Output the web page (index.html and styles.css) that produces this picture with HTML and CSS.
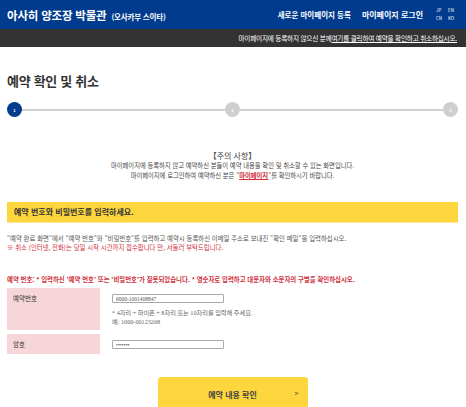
FILE: index.html
```html
<!DOCTYPE html>
<html lang="ko">
<head>
  <meta charset="UTF-8" />
  <meta name="viewport" content="width=device-width, initial-scale=1.0"/>
  <title>예약 확인 및 취소</title>
  <link rel="stylesheet" href="styles.css">
</head>
<body>
  <!-- Header -->
  <div class="header">
    <div class="brand">아사히 양조장 박물관 <span class="brand-sub">(오사카부 스이타)</span></div>
    <div class="header-links">
      <a href="#">새로운 마이페이지 등록</a>
      <a href="#">마이페이지 로그인</a>
      <div class="langs">
        <a href="#">JP</a><a href="#">EN</a>
        <a href="#">CN</a><a href="#">KO</a>
      </div>
    </div>
  </div>
  <div class="subbar">
    마이페이지에 등록하지 않으신 분께<a href="#">여기를 클릭하여 예약을 확인하고 취소하십시오.</a>
  </div>

  <div class="content">
    <h2>예약 확인 및 취소</h2>

    <!-- Steps -->
    <div class="steps">
      <span class="step active">1</span>
      <span class="step-line"></span>
      <span class="step">2</span>
      <span class="step-line"></span>
      <span class="step">3</span>
    </div>

    <div class="notice">
      <p class="notice-title">【주의 사항】</p>
      <p>마이페이지에 등록하지 않고 예약하신 분들이 예약 내용을 확인 및 취소할 수 있는 화면입니다.</p>
      <p>마이페이지에 로그인하여 예약하신 분은 "<a href="#">마이페이지</a>"를 확인하시기 바랍니다.</p>
    </div>

    <div class="section-head">예약 번호와 비밀번호를 입력하세요.</div>

    <p class="desc">"예약 완료 화면"에서 "예약 번호"와 "비밀번호"를 입력하고 예약시 등록하신 이메일 주소로 보내진 "확인 메일"을 입력하십시오.</p>
    <p class="desc warn">※ 취소 (인터넷, 전화)는 당일 시작 시간까지 접수합니다 만, 서둘러 부탁드립니다.</p>

    <p class="error">예약 번호: * 입력하신 '예약 번호' 또는 '비밀번호'가 잘못되었습니다. * 영숫자로 입력하고 대문자와 소문자의 구별을 확인하십시오.</p>

    <div class="form-row">
      <div class="form-label tall">예약번호</div>
      <div class="form-field">
        <input type="text" value="6000-1001408847">
        <p class="hint">* 4자리 + 하이픈 + 8자리 또는 10자리를 입력해 주세요.<br>예: 1000-00123268</p>
      </div>
    </div>
    <div class="form-row">
      <div class="form-label">암호</div>
      <div class="form-field">
        <input type="password" value="1234567">
      </div>
    </div>

    <div class="actions">
      <button>예약 내용 확인<span class="arrow">&gt;</span></button>
    </div>
  </div>
</body>
</html>
```

FILE: styles.css
```css
* {
  box-sizing: border-box;
}
body {
  margin: 0;
  font-family: "Noto Sans CJK KR", "Noto Sans", sans-serif;
  color: #333;
  background: #fff;
}
p {
  margin: 0;
}
a {
  color: inherit;
}

/* header */
.header {
  background-color: #003b8e;
  height: 29px;
  display: flex;
  align-items: center;
  justify-content: space-between;
  padding: 0 8px 0 7px;
  color: white;
}
.brand {
  font-size: 11.5px;
  font-weight: bold;
  letter-spacing: -0.2px;
}
.brand-sub {
  font-size: 7.5px;
  margin-left: 2px;
}
.header-links {
  display: flex;
  align-items: center;
}
.header-links > a {
  font-size: 7.5px;
  font-weight: bold;
  text-decoration: none;
  margin-right: 11px;
}
.header-links > a + a {
  font-size: 8px;
}
.langs {
  display: grid;
  grid-template-columns: 12px 10px;
  row-gap: 3px;
  margin-left: 2px;
}
.langs a {
  font-size: 4.5px;
  text-decoration: none;
  line-height: 5px;
}
.subbar {
  background-color: #333;
  height: 18px;
  color: white;
  font-size: 6.6px;
  text-align: right;
  padding: 4px 9px 0 0;
  letter-spacing: -0.2px;
}
.subbar a {
  text-decoration: underline;
}

/* main */
.content {
  padding: 0 8px 0 7px;
}
h2 {
  font-size: 13px;
  margin: 24px 0 0;
  line-height: 19px;
  letter-spacing: -0.3px;
}
.steps {
  display: flex;
  align-items: center;
  margin-top: 12px;
}
.step {
  width: 15px;
  height: 15px;
  border-radius: 50%;
  background-color: #cfcfcf;
  color: white;
  font-size: 4px;
  font-weight: bold;
  display: flex;
  align-items: center;
  justify-content: center;
  flex-shrink: 0;
}
.step.active {
  background-color: #003b8e;
}
.step-line {
  flex: 1;
  height: 2px;
  background-color: #d0d0d0;
}
.notice {
  text-align: center;
  margin-top: 33px;
  font-size: 6.3px;
  line-height: 10px;
  color: #444;
}
.notice-title {
  font-size: 8px;
  line-height: 11px;
}
.notice a {
  color: #d0313b;
  font-weight: bold;
}
.section-head {
  background-color: #fdd63e;
  border-bottom: 1px solid #fde69a;
  margin-top: 21px;
  height: 21px;
  padding: 4px 0 0 7px;
  font-size: 8px;
  font-weight: bold;
}
.desc {
  font-size: 6.4px;
  line-height: 9px;
  color: #555;
}
.section-head + .desc {
  margin-top: 11px;
}
.desc.warn {
  color: #d0313b;
}
.error {
  color: #d0313b;
  font-weight: bold;
  font-size: 6.4px;
  margin-top: 23px;
  line-height: 9px;
}
.form-row {
  display: flex;
  margin-top: 4px;
}
.form-row + .form-row {
  margin-top: 4px;
}
.form-label {
  width: 93px;
  height: 20px;
  background-color: #f6d6d8;
  font-size: 6.5px;
  padding: 5px 6px;
}
.form-label.tall {
  height: 42px;
}
.form-field {
  padding: 6px 0 0 12px;
}
.form-field input {
  width: 112px;
  height: 9px;
  font-size: 5.5px;
  padding: 0 3px;
  border: 1px solid #aaa;
  border-radius: 1px;
  color: #555;
  font-family: "Liberation Serif", serif;
  display: block;
}
.hint {
  font-size: 6.2px;
  line-height: 9px;
  color: #666;
  margin-top: 5px;
  font-family: "Liberation Serif", "Noto Sans CJK KR", serif;
}
.actions {
  display: flex;
  justify-content: center;
  margin-top: 23px;
}
button {
  width: 150px;
  height: 34px;
  background-color: #fdd63e;
  border: none;
  border-radius: 4px;
  font-family: inherit;
  font-size: 8px;
  font-weight: bold;
  color: #444;
  position: relative;
  box-shadow: 0 0 1px #fde69a;
}
button .arrow {
  position: absolute;
  right: 9px;
  top: 11px;
  font-weight: normal;
  font-size: 7px;
}
```
